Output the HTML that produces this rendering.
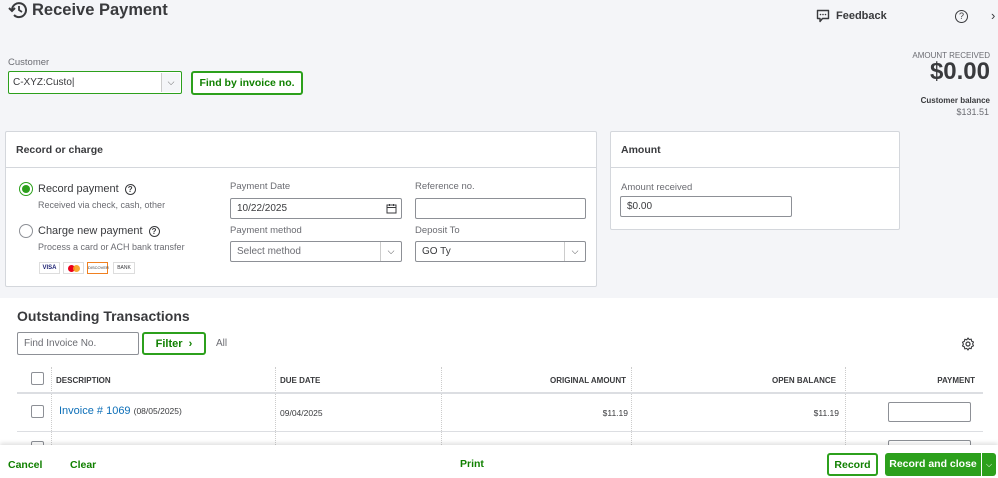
<!DOCTYPE html>
<html><head><style>
*{box-sizing:border-box;margin:0;padding:0}
body{width:998px;height:478px;overflow:hidden;font-family:"Liberation Sans",sans-serif;color:#393a3d;background:#fff;position:relative;font-size:10px}
.a{position:absolute}
.top{position:absolute;left:0;top:0;width:998px;height:298px;background:#f4f5f8}
.card{position:absolute;background:#fff;border:1px solid #d4d7dc;border-radius:2px}
.inp{position:absolute;background:#fff;border:1px solid #8d9096;border-radius:2px;font-size:10px;padding:0 6px;display:flex;align-items:center}
.lbl{position:absolute;font-size:9.5px;color:#6b6c72}
.gbtn{position:absolute;border:2px solid #2ca01c;border-radius:3px;color:#108000;font-weight:bold;font-size:11px;display:flex;align-items:center;justify-content:center;background:#fff}
.cb{position:absolute;width:13px;height:13px;border:1px solid #8d9096;border-radius:2px;background:#fff}
.th{position:absolute;font-size:8px;font-weight:bold;color:#393a3d;top:376px}
.vl{position:absolute;border-left:1px dotted #ccc;top:367px;height:78px}
.q{display:inline-block;width:11px;height:11px;border:1.3px solid #393a3d;border-radius:50%;font-size:8px;text-align:center;line-height:9px;font-weight:bold;vertical-align:middle;margin-left:6px}
</style></head><body>
<div class="top"></div>
<svg class="a" style="left:8px;top:1px" width="20" height="18" viewBox="0 0 20 18"><path d="M4 9a7 7 0 1 1 2 5" fill="none" stroke="#393a3d" stroke-width="2"/><path d="M1 7l3 3 3-3" fill="none" stroke="#393a3d" stroke-width="2"/><path d="M11 5v4l3 2" fill="none" stroke="#393a3d" stroke-width="1.8"/></svg>
<div class="a" style="left:32px;top:1px;font-size:16.5px;font-weight:bold;color:#393a3d">Receive Payment</div>
<svg class="a" style="left:816px;top:9px" width="14" height="14" viewBox="0 0 14 14"><path d="M1.5 1.5h11v8h-6l-2.5 3v-3h-2.5z" fill="none" stroke="#393a3d" stroke-width="1.4" stroke-linejoin="round"/><circle cx="4.5" cy="5.5" r=".8" fill="#393a3d"/><circle cx="7" cy="5.5" r=".8" fill="#393a3d"/><circle cx="9.5" cy="5.5" r=".8" fill="#393a3d"/></svg>
<div class="a" style="left:836px;top:10px;font-size:11px;font-weight:bold">Feedback</div>
<div class="a" style="left:955px;top:10px;width:13px;height:13px;border:1.3px solid #393a3d;border-radius:50%;font-size:9px;text-align:center;line-height:11px">?</div>
<div class="a" style="left:991px;top:8px;font-size:13px">›</div>
<div class="a" style="right:8px;top:51px;font-size:8px;color:#6b6c72">AMOUNT RECEIVED</div>
<div class="a" style="right:8px;top:58px;font-size:24px;font-weight:bold">$0.00</div>
<div class="a" style="right:8px;top:96px;font-size:8px;font-weight:bold;color:#393a3d">Customer balance</div>
<div class="a" style="right:9px;top:107px;font-size:9px;color:#6b6c72">$131.51</div>

<div class="lbl" style="left:8px;top:57px">Customer</div>
<div class="inp" style="left:8px;top:71px;width:174px;height:23px;border:1.5px solid #2ca01c;padding-left:4px">C-XYZ:Custo|</div>
<div class="a" style="left:161px;top:73px;width:19px;height:19px;border-left:1px solid #ccc;background:#f4f5f8;text-align:center;font-size:9px;line-height:19px;color:#555">⌵</div>
<div class="gbtn" style="left:191px;top:71px;width:112px;height:24px;font-size:10.5px">Find by invoice no.</div>

<div class="card" style="left:5px;top:131px;width:592px;height:156px"></div>
<div class="a" style="left:16px;top:144px;font-size:10.5px;font-weight:bold">Record or charge</div>
<div class="a" style="left:6px;top:167px;width:590px;border-top:1px solid #d4d7dc"></div>
<div class="a" style="left:19px;top:182px;width:14px;height:14px;border:1.3px solid #2ca01c;border-radius:50%;background:#fff"><div style="margin:2px;width:8px;height:8px;border-radius:50%;background:#2ca01c"></div></div>
<div class="a" style="left:38px;top:183px;font-size:11px">Record payment<span class="q">?</span></div>
<div class="a" style="left:38px;top:200px;font-size:9px;color:#6b6c72">Received via check, cash, other</div>
<div class="a" style="left:19px;top:224px;width:14px;height:14px;border:1px solid #8d9096;border-radius:50%;background:#fff"></div>
<div class="a" style="left:38px;top:225px;font-size:11px">Charge new payment<span class="q">?</span></div>
<div class="a" style="left:38px;top:242px;font-size:9px;color:#6b6c72">Process a card or ACH bank transfer</div>
<div class="a" style="left:39px;top:262px;width:21px;height:12px;border:1px solid #ddd;font-size:6px;font-weight:bold;color:#1a1f71;text-align:center;line-height:10px">VISA</div>
<div class="a" style="left:63px;top:262px;width:21px;height:12px;border:1px solid #ddd"><div class="a" style="left:4px;top:2px;width:7px;height:7px;border-radius:50%;background:#eb001b"></div><div class="a" style="left:9px;top:2px;width:7px;height:7px;border-radius:50%;background:#f79e1b;opacity:.9"></div></div>
<div class="a" style="left:87px;top:262px;width:21px;height:12px;border:1px solid #f08020;font-size:4px;text-align:center;line-height:10px">DISCOVER</div>
<div class="a" style="left:113px;top:262px;width:22px;height:12px;border:1px solid #ddd;font-size:5px;text-align:center;line-height:10px">BANK</div>

<div class="lbl" style="left:230px;top:181px">Payment Date</div>
<div class="inp" style="left:230px;top:198px;width:172px;height:21px">10/22/2025</div>
<svg class="a" style="left:386px;top:203px" width="11" height="11" viewBox="0 0 11 11"><rect x="1" y="2" width="9" height="8" fill="none" stroke="#393a3d"/><path d="M1 4.5h9M3.5 1v2M7.5 1v2" stroke="#393a3d"/></svg>
<div class="lbl" style="left:230px;top:225px">Payment method</div>
<div class="inp" style="left:230px;top:241px;width:172px;height:21px;color:#6b6c72">Select method</div>
<div class="a" style="left:380px;top:242px;width:21px;height:19px;border-left:1px solid #ccc;text-align:center;line-height:19px;font-size:9px">⌵</div>
<div class="lbl" style="left:415px;top:181px">Reference no.</div>
<div class="inp" style="left:415px;top:198px;width:171px;height:21px"></div>
<div class="lbl" style="left:415px;top:225px">Deposit To</div>
<div class="inp" style="left:415px;top:241px;width:171px;height:21px">GO Ty</div>
<div class="a" style="left:564px;top:242px;width:21px;height:19px;border-left:1px solid #ccc;text-align:center;line-height:19px;font-size:9px">⌵</div>

<div class="card" style="left:610px;top:131px;width:290px;height:99px"></div>
<div class="a" style="left:621px;top:144px;font-size:10.5px;font-weight:bold">Amount</div>
<div class="a" style="left:611px;top:167px;width:288px;border-top:1px solid #d4d7dc"></div>
<div class="lbl" style="left:621px;top:182px">Amount received</div>
<div class="inp" style="left:620px;top:196px;width:172px;height:21px">$0.00</div>

<div class="a" style="left:17px;top:308px;font-size:14px;font-weight:bold">Outstanding Transactions</div>
<div class="inp" style="left:17px;top:332px;width:122px;height:23px;color:#6b6c72">Find Invoice No.</div>
<div class="gbtn" style="left:142px;top:332px;width:64px;height:23px">Filter&nbsp;&nbsp;›</div>
<div class="a" style="left:216px;top:338px;font-size:10px;color:#6b6c72">All</div>
<svg class="a" style="left:961px;top:337px" width="14" height="14" viewBox="0 0 14 14"><circle cx="7" cy="7" r="2" fill="none" stroke="#393a3d" stroke-width="1.2"/><path d="M7 1l1.2 1.6 2-.5.4 2 1.9.9-.9 1.9.9 1.9-1.9.9-.4 2-2-.5L7 13l-1.2-1.6-2 .5-.4-2-1.9-.9.9-1.9L1.5 5.2l1.9-.9.4-2 2 .5z" fill="none" stroke="#393a3d" stroke-width="1.1" stroke-linejoin="round"/></svg>

<div class="cb" style="left:31px;top:372px"></div>
<div class="th" style="left:56px">DESCRIPTION</div>
<div class="th" style="left:280px">DUE DATE</div>
<div class="th" style="right:372px">ORIGINAL AMOUNT</div>
<div class="th" style="right:162px">OPEN BALANCE</div>
<div class="th" style="right:23px">PAYMENT</div>
<div class="vl" style="left:51px"></div><div class="vl" style="left:275px"></div><div class="vl" style="left:441px"></div><div class="vl" style="left:631px"></div><div class="vl" style="left:845px"></div>
<div class="a" style="left:17px;top:392px;width:966px;border-top:2px solid #dcdee2"></div>
<div class="cb" style="left:31px;top:405px"></div>
<div class="a" style="left:59px;top:405px;font-size:11px;color:#0d6fb8">Invoice # 1069 <span style="font-size:8.5px;color:#393a3d">(08/05/2025)</span></div>
<div class="a" style="left:280px;top:408px;font-size:8.5px">09/04/2025</div>
<div class="a" style="right:370px;top:408px;font-size:8.5px">$11.19</div>
<div class="a" style="right:159px;top:408px;font-size:8.5px">$11.19</div>
<div class="inp" style="left:888px;top:402px;width:83px;height:20px"></div>
<div class="a" style="left:17px;top:431px;width:966px;border-top:1px solid #dcdee2"></div>
<div class="cb" style="left:31px;top:441px"></div>
<div class="inp" style="left:888px;top:440px;width:83px;height:20px"></div>

<div class="a" style="left:0;top:445px;width:998px;height:33px;background:#fff;box-shadow:0 -2px 4px rgba(0,0,0,.12)"></div>
<div class="a" style="left:8px;top:459px;font-size:10.5px;font-weight:bold;color:#108000">Cancel</div>
<div class="a" style="left:70px;top:459px;font-size:10.5px;font-weight:bold;color:#108000">Clear</div>
<div class="a" style="left:460px;top:458px;font-size:10.5px;font-weight:bold;color:#108000">Print</div>
<div class="gbtn" style="left:827px;top:453px;width:51px;height:23px;font-size:10.5px">Record</div>
<div class="a" style="left:885px;top:453px;width:96px;height:23px;background:#2ca01c;border-radius:3px 0 0 3px;color:#fff;font-weight:bold;font-size:10.5px;text-align:center;line-height:23px">Record and close</div>
<div class="a" style="left:981px;top:453px;width:15px;height:23px;background:#2ca01c;border-left:1px solid #fff;border-radius:0 3px 3px 0;color:#fff;font-size:8px;text-align:center;line-height:23px">⌵</div>
</body></html>
